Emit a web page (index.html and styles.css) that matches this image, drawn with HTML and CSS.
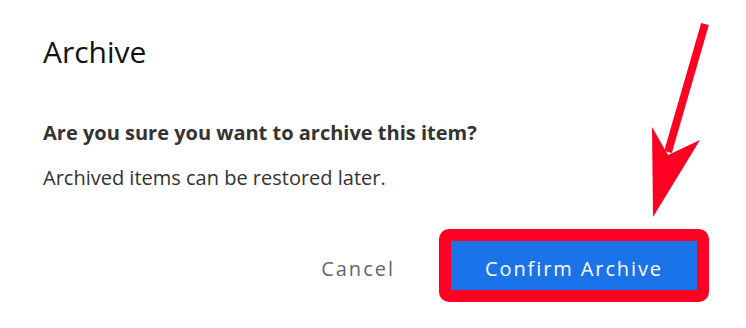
FILE: index.html
```html
<!DOCTYPE html>
<html>
<head>
<meta charset="utf-8">
<link rel="stylesheet" href="styles.css">
</head>
<body>
<div class="dialog">
  <h1 class="title">Archive</h1>
  <div class="body">
    <p class="question">Are you sure you want to archive this item?</p>
    <p class="note">Archived items can be restored later.</p>
  </div>
  <div class="actions">
    <button class="btn-cancel">Cancel</button>
    <div class="highlight">
      <button class="btn-confirm">Confirm Archive</button>
    </div>
  </div>
</div>
<svg class="arrow" width="746" height="328" viewBox="0 0 746 328">
  <line x1="705" y1="24" x2="668" y2="152" stroke="#ff0022" stroke-width="8"/>
  <polygon points="652,127 668,155 700,140 653,217" fill="#ff0022"/>
</svg>
</body>
</html>
```
FILE: styles.css
```css
html, body {
  margin: 0;
  padding: 0;
  background: #ffffff;
}
body {
  width: 746px;
  height: 328px;
  overflow: hidden;
  position: relative;
  font-family: "Open Sans", "Noto Sans", sans-serif;
}
.dialog {
  padding: 32px 37px 0 43px;
}
.title {
  margin: 0;
  font-size: 30px;
  font-weight: 400;
  color: #111;
  line-height: 40px;
}
.body {
  margin-top: 49px;
}
.question {
  margin: 0;
  font-size: 20px;
  font-weight: 700;
  color: #333;
  line-height: 24px;
}
.note {
  margin: 21px 0 0;
  font-size: 20px;
  color: #333;
  line-height: 24px;
}
.actions {
  margin-top: 39px;
  display: flex;
  justify-content: flex-end;
  align-items: center;
  gap: 44px;
}
.btn-cancel {
  border: 0;
  background: none;
  font-family: inherit;
  font-size: 20px;
  letter-spacing: 2px;
  color: #666;
  padding: 6px 0 0;
}
.highlight {
  border: 12px solid #ff0022;
  border-radius: 10px;
}
.btn-confirm {
  display: block;
  border: 0;
  background: #1a73e8;
  color: #fff;
  font-family: inherit;
  font-size: 20px;
  letter-spacing: 1.9px;
  width: 246px;
  height: 49px;
  padding: 5px 0 0;
}
.arrow {
  position: absolute;
  left: 0;
  top: 0;
  pointer-events: none;
}
```
